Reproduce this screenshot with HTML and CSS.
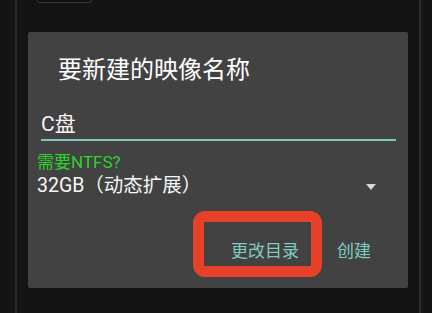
FILE: index.html
```html
<!DOCTYPE html>
<html lang="zh">
<head>
<meta charset="utf-8">
<link rel="stylesheet" href="styles.css">
</head>
<body>
<div class="frame">
  <div class="tab"></div>
  <div class="dialog">
    <div class="title">要新建的映像名称</div>
    <div class="edit">C盘</div>
    <div class="label">需要NTFS?</div>
    <div class="spinner">
      <span class="spinner-text">32GB（动态扩展）</span>
      <svg class="caret" width="10" height="6" viewBox="0 0 10 6"><path d="M0 0H10L5 6Z" fill="#d6d6d6"/></svg>
    </div>
    <div class="actions">
      <button class="btn btn-marked">更改目录<span class="mark"></span></button>
      <button class="btn">创建</button>
    </div>
  </div>
</div>
</body>
</html>
```

FILE: styles.css
```css
html, body {
  margin: 0;
  padding: 0;
}
body {
  width: 432px;
  height: 313px;
  overflow: hidden;
  background: #141414;
  font-family: Roboto, "Noto Sans CJK SC", sans-serif;
}
.frame {
  margin-left: 15px;
  width: 380px;
  height: 313px;
  padding: 0 11px;
  border-left: 2px solid #2a2a2a;
  border-right: 2px solid #2c2c2c;
  box-shadow: 2px 0 0 #181818;
}
.tab {
  margin-left: 9px;
  width: 53px;
  height: 2px;
  background: #101010;
  border: 1px solid #363636;
  border-top: none;
  border-radius: 0 0 3px 3px;
}
.dialog {
  margin-top: 29px;
  background: #424242;
  border-radius: 2px;
  padding: 0 0 27px 0;
  box-sizing: border-box;
  height: 256px;
}
.title {
  padding: 24px 0 0 30px;
  font-size: 24px;
  line-height: 28px;
  color: #ffffff;
}
.edit {
  margin: 28px 12px 0 13px;
  font-size: 21px;
  line-height: 24px;
  padding-bottom: 3px;
  color: #f5f5f5;
  border-bottom: 2px solid #7fc6bd;
}
.label {
  margin: 12px 0 0 9px;
  font-size: 17px;
  line-height: 19px;
  color: #2ed12b;
}
.spinner {
  margin: 3px 32px 0 9px;
  display: flex;
  align-items: center;
  justify-content: space-between;
  font-size: 19.5px;
  line-height: 22px;
  color: #f7f7f7;
}
.caret {
  display: block;
  margin-top: 2px;
}
.actions {
  margin-top: 44px;
  padding-right: 37px;
  display: flex;
  justify-content: flex-end;
  gap: 38px;
}
.btn {
  position: relative;
  padding: 0;
  margin: 0;
  border: none;
  background: none;
  font-family: inherit;
  font-size: 17px;
  line-height: 20px;
  color: #80cbc4;
}
.mark {
  position: absolute;
  left: -38px;
  right: -23px;
  top: -30px;
  bottom: -16px;
  border: 11px solid #e8412a;
  border-radius: 12px;
}
```
